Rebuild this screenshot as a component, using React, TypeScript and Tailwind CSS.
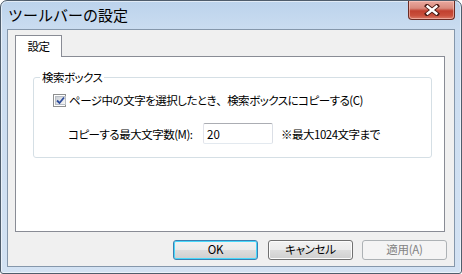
import React from "react";

const jp = "font-['Noto_Sans_CJK_JP','Noto_Sans',sans-serif] [font-feature-settings:'palt']";
const body = "text-[11.5px] tracking-[-0.5px] leading-[14px] text-black";

function CheckBox() {
  return (
    <span className="w-[13px] h-[13px] border border-[#8e8f8f] bg-white p-[1px] flex shrink-0">
      <span className="flex-1 bg-[linear-gradient(135deg,#cbcfd5,#f7f7f7)] border border-[#b8bdc4] flex items-center justify-center">
        <svg width="9" height="9" viewBox="0 0 9 9">
          <path d="M1 4.5 L3.5 7 L8 1.5" fill="none" stroke="#2d4c9c" strokeWidth="1.8" />
        </svg>
      </span>
    </span>
  );
}

function Btn({ children, kind }: { children: React.ReactNode; kind?: "default" | "disabled" }) {
  if (kind === "disabled") {
    return (
      <div className="w-[85px] h-[20px] rounded-[3px] border border-[#adb2b5] bg-[#f4f4f4] flex items-center justify-center text-[11.5px] tracking-[-0.3px] text-[#838383]">
        {children}
      </div>
    );
  }
  const border = kind === "default" ? "border-[#3c7fb1]" : "border-[#707070]";
  const inner = kind === "default" ? "shadow-[inset_0_0_0_1px_#48d8fb]" : "shadow-[inset_0_0_0_1px_#fcfcfc]";
  return (
    <div
      className={`w-[85px] h-[20px] rounded-[3px] border ${border} ${inner} bg-[linear-gradient(180deg,#f2f2f2_0%,#ebebeb_50%,#dddddd_50%,#cfcfcf_100%)] flex items-center justify-center text-[11.5px] tracking-[-0.3px] text-black`}
    >
      {children}
    </div>
  );
}

export default function App() {
  return (
    <div
      className={`w-[462px] h-[274px] flex flex-col rounded-t-[7px] rounded-b-[3px] border border-[#4f5d6c] bg-[linear-gradient(180deg,#bcd3ec_0px,#cadcf0_28px,#d3e2f3_100%)] shadow-[inset_0_0_0_1px_rgba(255,255,255,0.55)] overflow-hidden ${jp}`}
    >
      <div className="h-[28px] flex items-start pl-[7px] pr-[6px] shrink-0">
        <span className="mt-[5px] text-[15px] leading-[18px] text-black [font-feature-settings:normal]">ツールバーの設定</span>
        <div className="ml-auto w-[47px] h-[19px] rounded-b-[4px] border border-t-0 border-[#6a2b24] bg-[linear-gradient(180deg,#e9a99f_0%,#d98a7d_40%,#c1402f_55%,#c94f3c_80%,#da7a68_100%)] shadow-[inset_0_0_0_1px_rgba(255,210,200,0.55)] flex items-center justify-center">
          <svg width="16" height="12" viewBox="0 0 16 12">
            <path d="M3 2 L13 10 M13 2 L3 10" stroke="#4a1a14" strokeWidth="4.2" strokeLinecap="square" />
            <path d="M3.6 2.5 L12.4 9.5 M12.4 2.5 L3.6 9.5" stroke="#ffffff" strokeWidth="2.4" strokeLinecap="square" />
          </svg>
        </div>
      </div>

      <div className="mx-[6px] mb-[6px] flex-1 border border-[#8597ab] bg-[#f0f0f0] flex flex-col pl-[7px] pr-[7px] pt-[5px]">
        <div className="flex">
          <div className={`relative z-10 -mb-px w-[47px] h-[22px] border border-b-0 border-[#898c95] bg-white flex items-start justify-center pt-[3px] ${body}`}>
            設定
          </div>
        </div>
        <div className="w-[430px] h-[176px] border border-[#898c95] bg-white pl-[17px] pt-[13px]">
          <fieldset className="w-[399px] h-[88px] border border-[#d5dfe5] rounded-[3px] m-0 p-0 flex flex-col">
            <legend className={`ml-[6px] px-[2px] ${body}`}>検索ボックス</legend>
            <div className="flex flex-col pl-[19px] pt-[9px]">
              <div className={`flex items-center h-[14px] gap-[3px] ${body}`}>
                <CheckBox />
                <span className="whitespace-nowrap">
                  ページ中の文字を選択したとき<span className="[font-feature-settings:normal]">、</span>検索ボックスにコピーする(C)
                </span>
              </div>
              <div className={`flex items-center mt-[16px] pl-[15px] ${body}`}>
                <span className="w-[135px] shrink-0 whitespace-nowrap">コピーする最大文字数(M):</span>
                <div className="w-[70px] h-[21px] shrink-0 rounded-[2px] border border-[#abadb3] border-l-[#e2e3ea] border-r-[#dbdfe6] border-b-[#e3e9ef] bg-white flex items-center pl-[3px] tracking-normal">
                  20
                </div>
                <span className="ml-[8px] whitespace-nowrap">※最大1024文字まで</span>
              </div>
            </div>
          </fieldset>
        </div>
        <div className="flex justify-end mt-[8px] gap-[9px]">
          <div className="mr-[1px]">
            <Btn kind="default">OK</Btn>
          </div>
          <Btn>キャンセル</Btn>
          <Btn kind="disabled">適用(A)</Btn>
        </div>
      </div>
    </div>
  );
}
